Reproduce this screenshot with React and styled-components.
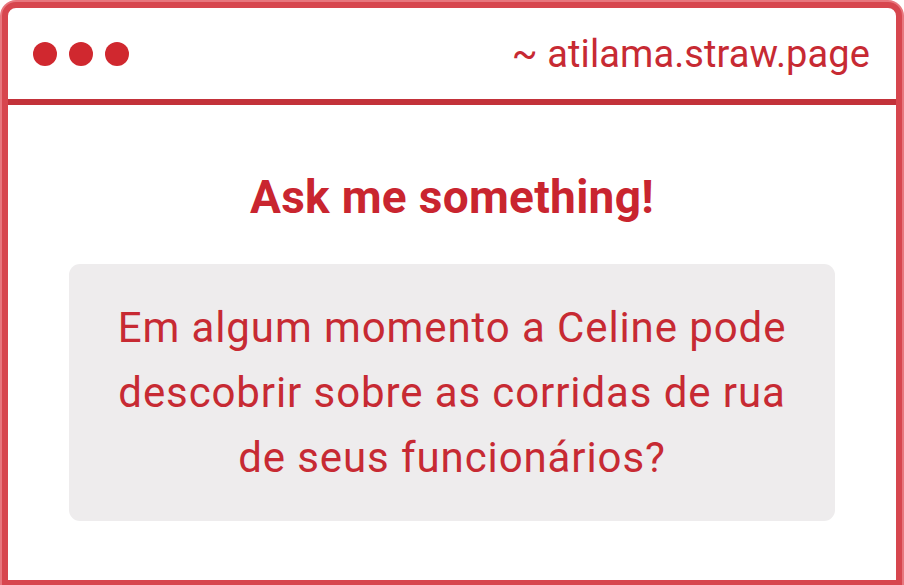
import React from "react";
import styled, { createGlobalStyle } from "styled-components";

const GlobalStyle = createGlobalStyle`
  html, body {
    margin: 0;
    padding: 0;
    background: #ffffff;
  }
  body {
    font-family: Roboto, "Liberation Sans", sans-serif;
  }
`;

const Outer = styled.div`
  width: 904px;
  height: 585px;
  box-sizing: border-box;
  padding: 2px 2px 0 2px;
  background: #e8767d;
  border-radius: 16px 16px 0 0;
`;

const Window = styled.div`
  height: 100%;
  box-sizing: border-box;
  border: 6px solid #d7464e;
  border-bottom-width: 5px;
  border-radius: 14px 14px 0 0;
  background: #ffffff;
  display: flex;
  flex-direction: column;
`;

const TitleBar = styled.header`
  height: 91px;
  display: flex;
  align-items: center;
  justify-content: space-between;
  padding: 0 26px 0 25px;
  border-bottom: 6px solid #c3323a;
`;

const Dots = styled.div`
  display: flex;
  gap: 12px;
  margin-top: 1px;
`;

const Dot = styled.span`
  width: 24px;
  height: 24px;
  border-radius: 50%;
  background: #d0282f;
`;

const Url = styled.span`
  color: #c72a33;
  font-size: 38px;
  letter-spacing: 0.1px;
`;

const Body = styled.main`
  flex: 1;
  display: flex;
  flex-direction: column;
  align-items: center;
  padding: 70px 61px 0 61px;
`;

const Heading = styled.h1`
  margin: 0;
  color: #c9252f;
  font-size: 46px;
  font-weight: 700;
  line-height: 44px;
  letter-spacing: 0.3px;
`;

const QuestionBox = styled.div`
  align-self: stretch;
  margin-top: 45px;
  height: 257px;
  box-sizing: border-box;
  background: #eeeced;
  border-radius: 11px;
  display: flex;
  align-items: center;
  justify-content: center;
  padding: 0 20px;
`;

const Question = styled.p`
  margin: 0;
  text-align: center;
  color: #c72a33;
  font-size: 42px;
  line-height: 65px;
  letter-spacing: 0.9px;
  white-space: nowrap;
`;

export default function App() {
  return (
    <>
      <GlobalStyle />
      <Outer>
        <Window>
          <TitleBar>
            <Dots>
              <Dot />
              <Dot />
              <Dot />
            </Dots>
            <Url>~ atilama.straw.page</Url>
          </TitleBar>
          <Body>
            <Heading>Ask me something!</Heading>
            <QuestionBox>
              <Question>
                Em algum momento a Celine pode
                <br />
                descobrir sobre as corridas de rua
                <br />
                de seus funcionários?
              </Question>
            </QuestionBox>
          </Body>
        </Window>
      </Outer>
    </>
  );
}
